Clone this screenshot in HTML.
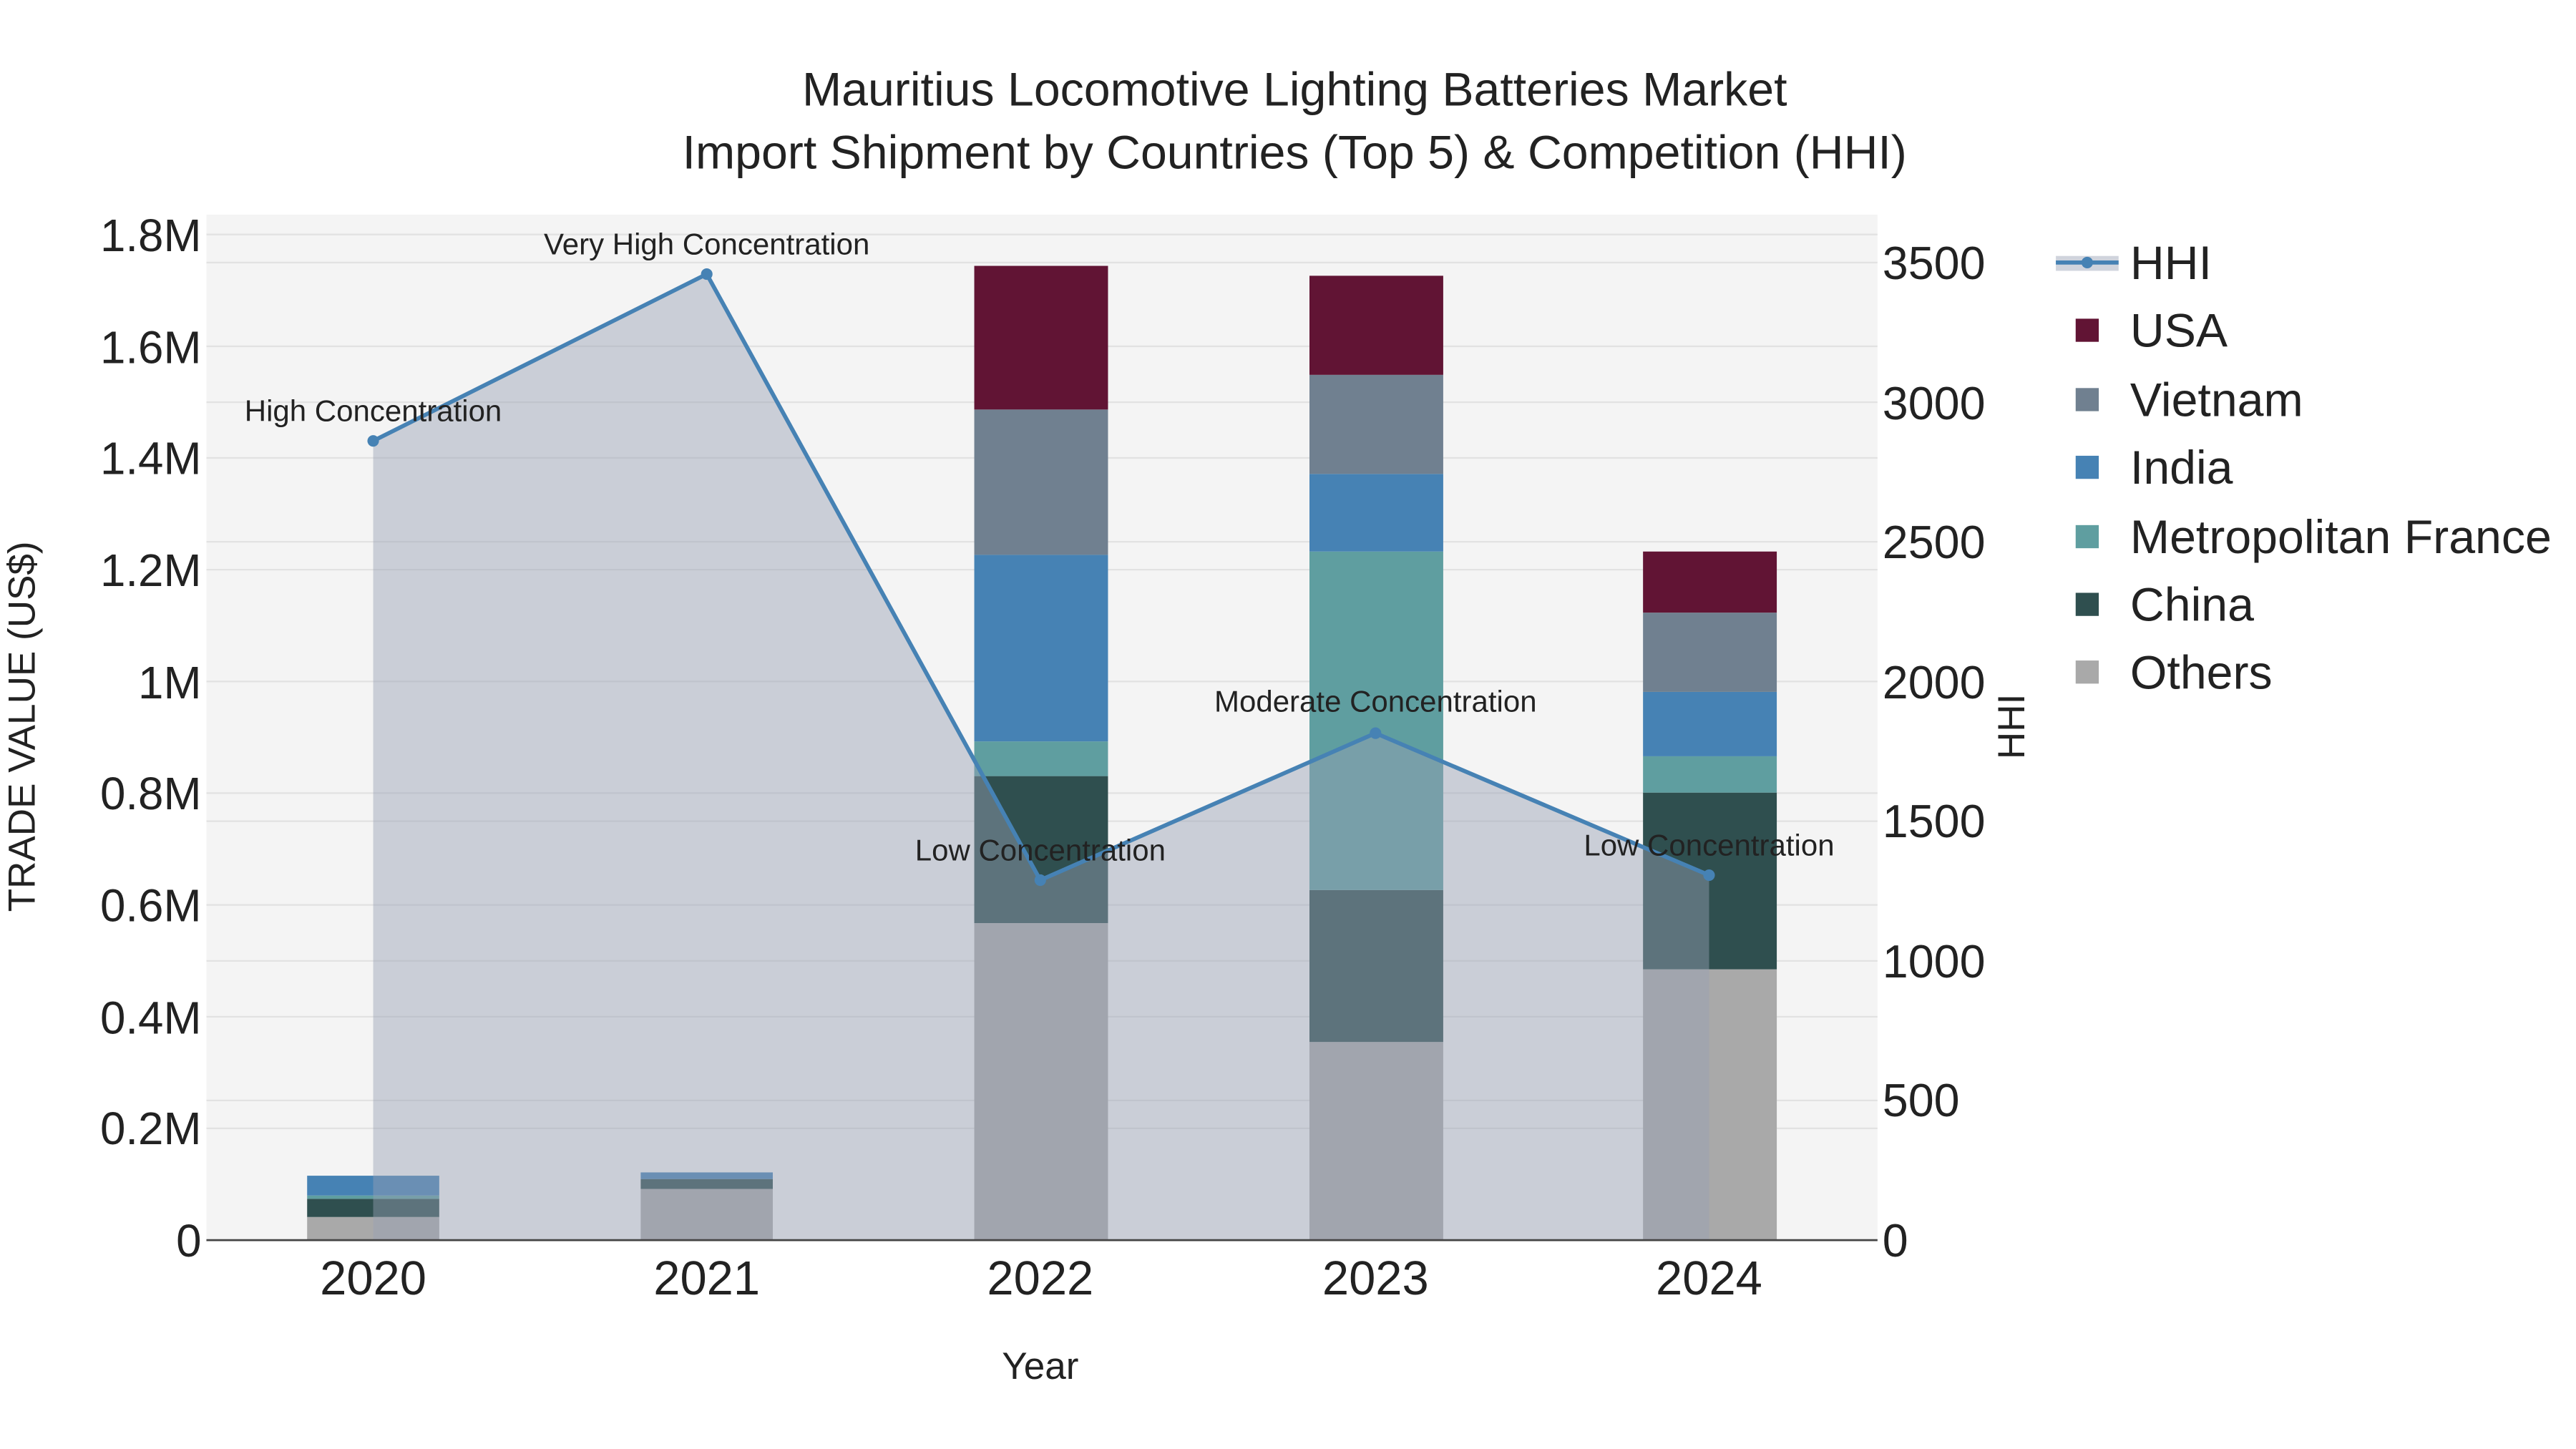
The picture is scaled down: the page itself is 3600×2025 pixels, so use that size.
<!DOCTYPE html>
<html><head><meta charset="utf-8"><style>
html,body{margin:0;padding:0;background:#fff;}
svg{display:block;}
text{font-family:"Liberation Sans",Arial,sans-serif;fill:#222;}
</style></head><body>
<svg width="3600" height="2025" viewBox="0 0 1560 877.5" xmlns="http://www.w3.org/2000/svg">
<rect x="0" y="0" width="1560" height="877.5" fill="#fff"/>
<rect x="125" y="130" width="1012" height="621" fill="#f4f4f4"/>
<g stroke="#e2e2e2" stroke-width="1">
<line x1="125" x2="1137" y1="683.3" y2="683.3"/><line x1="125" x2="1137" y1="615.7" y2="615.7"/>
<line x1="125" x2="1137" y1="548" y2="548"/><line x1="125" x2="1137" y1="480.3" y2="480.3"/>
<line x1="125" x2="1137" y1="412.7" y2="412.7"/><line x1="125" x2="1137" y1="345" y2="345"/>
<line x1="125" x2="1137" y1="277.3" y2="277.3"/><line x1="125" x2="1137" y1="209.7" y2="209.7"/>
<line x1="125" x2="1137" y1="142" y2="142"/>
<line x1="125" x2="1137" y1="666.4" y2="666.4"/><line x1="125" x2="1137" y1="581.9" y2="581.9"/>
<line x1="125" x2="1137" y1="497.3" y2="497.3"/><line x1="125" x2="1137" y1="328.1" y2="328.1"/>
<line x1="125" x2="1137" y1="243.6" y2="243.6"/><line x1="125" x2="1137" y1="159" y2="159"/>
</g>
<g>
<rect x="186" y="737" width="80" height="14" fill="#a9a9a9"/>
<rect x="186" y="726" width="80" height="11" fill="#2f4f4f"/>
<rect x="186" y="724" width="80" height="2" fill="#5f9ea0"/>
<rect x="186" y="712" width="80" height="12" fill="#4682b4"/>

<rect x="388" y="720" width="80" height="31" fill="#a9a9a9"/>
<rect x="388" y="714" width="80" height="6" fill="#2f4f4f"/>
<rect x="388" y="710" width="80" height="4" fill="#4682b4"/>

<rect x="590" y="559" width="81" height="192" fill="#a9a9a9"/>
<rect x="590" y="470" width="81" height="89" fill="#2f4f4f"/>
<rect x="590" y="449" width="81" height="21" fill="#5f9ea0"/>
<rect x="590" y="336" width="81" height="113" fill="#4682b4"/>
<rect x="590" y="248" width="81" height="88" fill="#708090"/>
<rect x="590" y="161" width="81" height="87" fill="#611434"/>

<rect x="793" y="631" width="81" height="120" fill="#a9a9a9"/>
<rect x="793" y="539" width="81" height="92" fill="#2f4f4f"/>
<rect x="793" y="334" width="81" height="205" fill="#5f9ea0"/>
<rect x="793" y="287" width="81" height="47" fill="#4682b4"/>
<rect x="793" y="227" width="81" height="60" fill="#708090"/>
<rect x="793" y="167" width="81" height="60" fill="#611434"/>

<rect x="995" y="587" width="81" height="164" fill="#a9a9a9"/>
<rect x="995" y="480" width="81" height="107" fill="#2f4f4f"/>
<rect x="995" y="458" width="81" height="22" fill="#5f9ea0"/>
<rect x="995" y="419" width="81" height="39" fill="#4682b4"/>
<rect x="995" y="371" width="81" height="48" fill="#708090"/>
<rect x="995" y="334" width="81" height="37" fill="#611434"/>
</g>
<polygon points="226,267 428,166 630,533 833,444 1035,530 1035,751 226,751" fill="rgba(150,160,180,0.45)"/>
<polyline points="226,267 428,166 630,533 833,444 1035,530" fill="none" stroke="#4682b4" stroke-width="2.5"/>
<g fill="#4682b4"><circle cx="226" cy="267" r="3.5"/><circle cx="428" cy="166" r="3.5"/><circle cx="630" cy="533" r="3.5"/><circle cx="833" cy="444" r="3.5"/><circle cx="1035" cy="530" r="3.5"/></g>
<line x1="125" x2="1137" y1="751" y2="751" stroke="#444" stroke-width="1.2"/>
<g font-size="18.2" text-anchor="middle">
<text x="428" y="154">Very High Concentration</text>
<text x="226" y="255">High Concentration</text>
<text x="630" y="521">Low Concentration</text>
<text x="833" y="431">Moderate Concentration</text>
<text x="1035" y="518">Low Concentration</text>
</g>
<g font-size="28.7" text-anchor="middle">
<text x="784" y="64">Mauritius Locomotive Lighting Batteries Market</text>
<text x="784" y="102">Import Shipment by Countries (Top 5) &amp; Competition (HHI)</text>
</g>
<g font-size="27.6" text-anchor="end">
<text x="122" y="761">0</text><text x="122" y="693">0.2M</text><text x="122" y="626">0.4M</text>
<text x="122" y="558">0.6M</text><text x="122" y="490">0.8M</text><text x="122" y="423">1M</text>
<text x="122" y="355">1.2M</text><text x="122" y="287">1.4M</text><text x="122" y="220">1.6M</text>
<text x="122" y="152">1.8M</text>
</g>
<g font-size="28" text-anchor="start">
<text x="1140" y="761">0</text><text x="1140" y="676">500</text><text x="1140" y="592">1000</text>
<text x="1140" y="507">1500</text><text x="1140" y="423">2000</text><text x="1140" y="338">2500</text>
<text x="1140" y="254">3000</text><text x="1140" y="169">3500</text>
</g>
<g font-size="29" text-anchor="middle">
<text x="226" y="784">2020</text><text x="428" y="784">2021</text><text x="630" y="784">2022</text>
<text x="833" y="784">2023</text><text x="1035" y="784">2024</text>
</g>
<text x="630" y="835" font-size="23" text-anchor="middle">Year</text>
<text transform="translate(21,440) rotate(-90)" font-size="23" text-anchor="middle">TRADE VALUE (US$)</text>
<text transform="translate(1226,440) rotate(-90)" font-size="23" text-anchor="middle">HHI</text>
<rect x="1245" y="155" width="38" height="9" fill="rgba(150,160,180,0.45)"/>
<line x1="1245" x2="1283" y1="159" y2="159" stroke="#4682b4" stroke-width="2.5"/>
<circle cx="1264" cy="159" r="3.5" fill="#4682b4"/>
<g>
<rect x="1257" y="193" width="14" height="14" fill="#611434"/>
<rect x="1257" y="235" width="14" height="14" fill="#708090"/>
<rect x="1257" y="276" width="14" height="14" fill="#4682b4"/>
<rect x="1257" y="318" width="14" height="14" fill="#5f9ea0"/>
<rect x="1257" y="359" width="14" height="14" fill="#2f4f4f"/>
<rect x="1257" y="400" width="14" height="14" fill="#a9a9a9"/>
</g>
<g font-size="28.7">
<text x="1290" y="169">HHI</text>
<text x="1290" y="210">USA</text>
<text x="1290" y="252">Vietnam</text>
<text x="1290" y="293">India</text>
<text x="1290" y="335">Metropolitan France</text>
<text x="1290" y="376">China</text>
<text x="1290" y="417">Others</text>
</g>
</svg>
</body></html>
